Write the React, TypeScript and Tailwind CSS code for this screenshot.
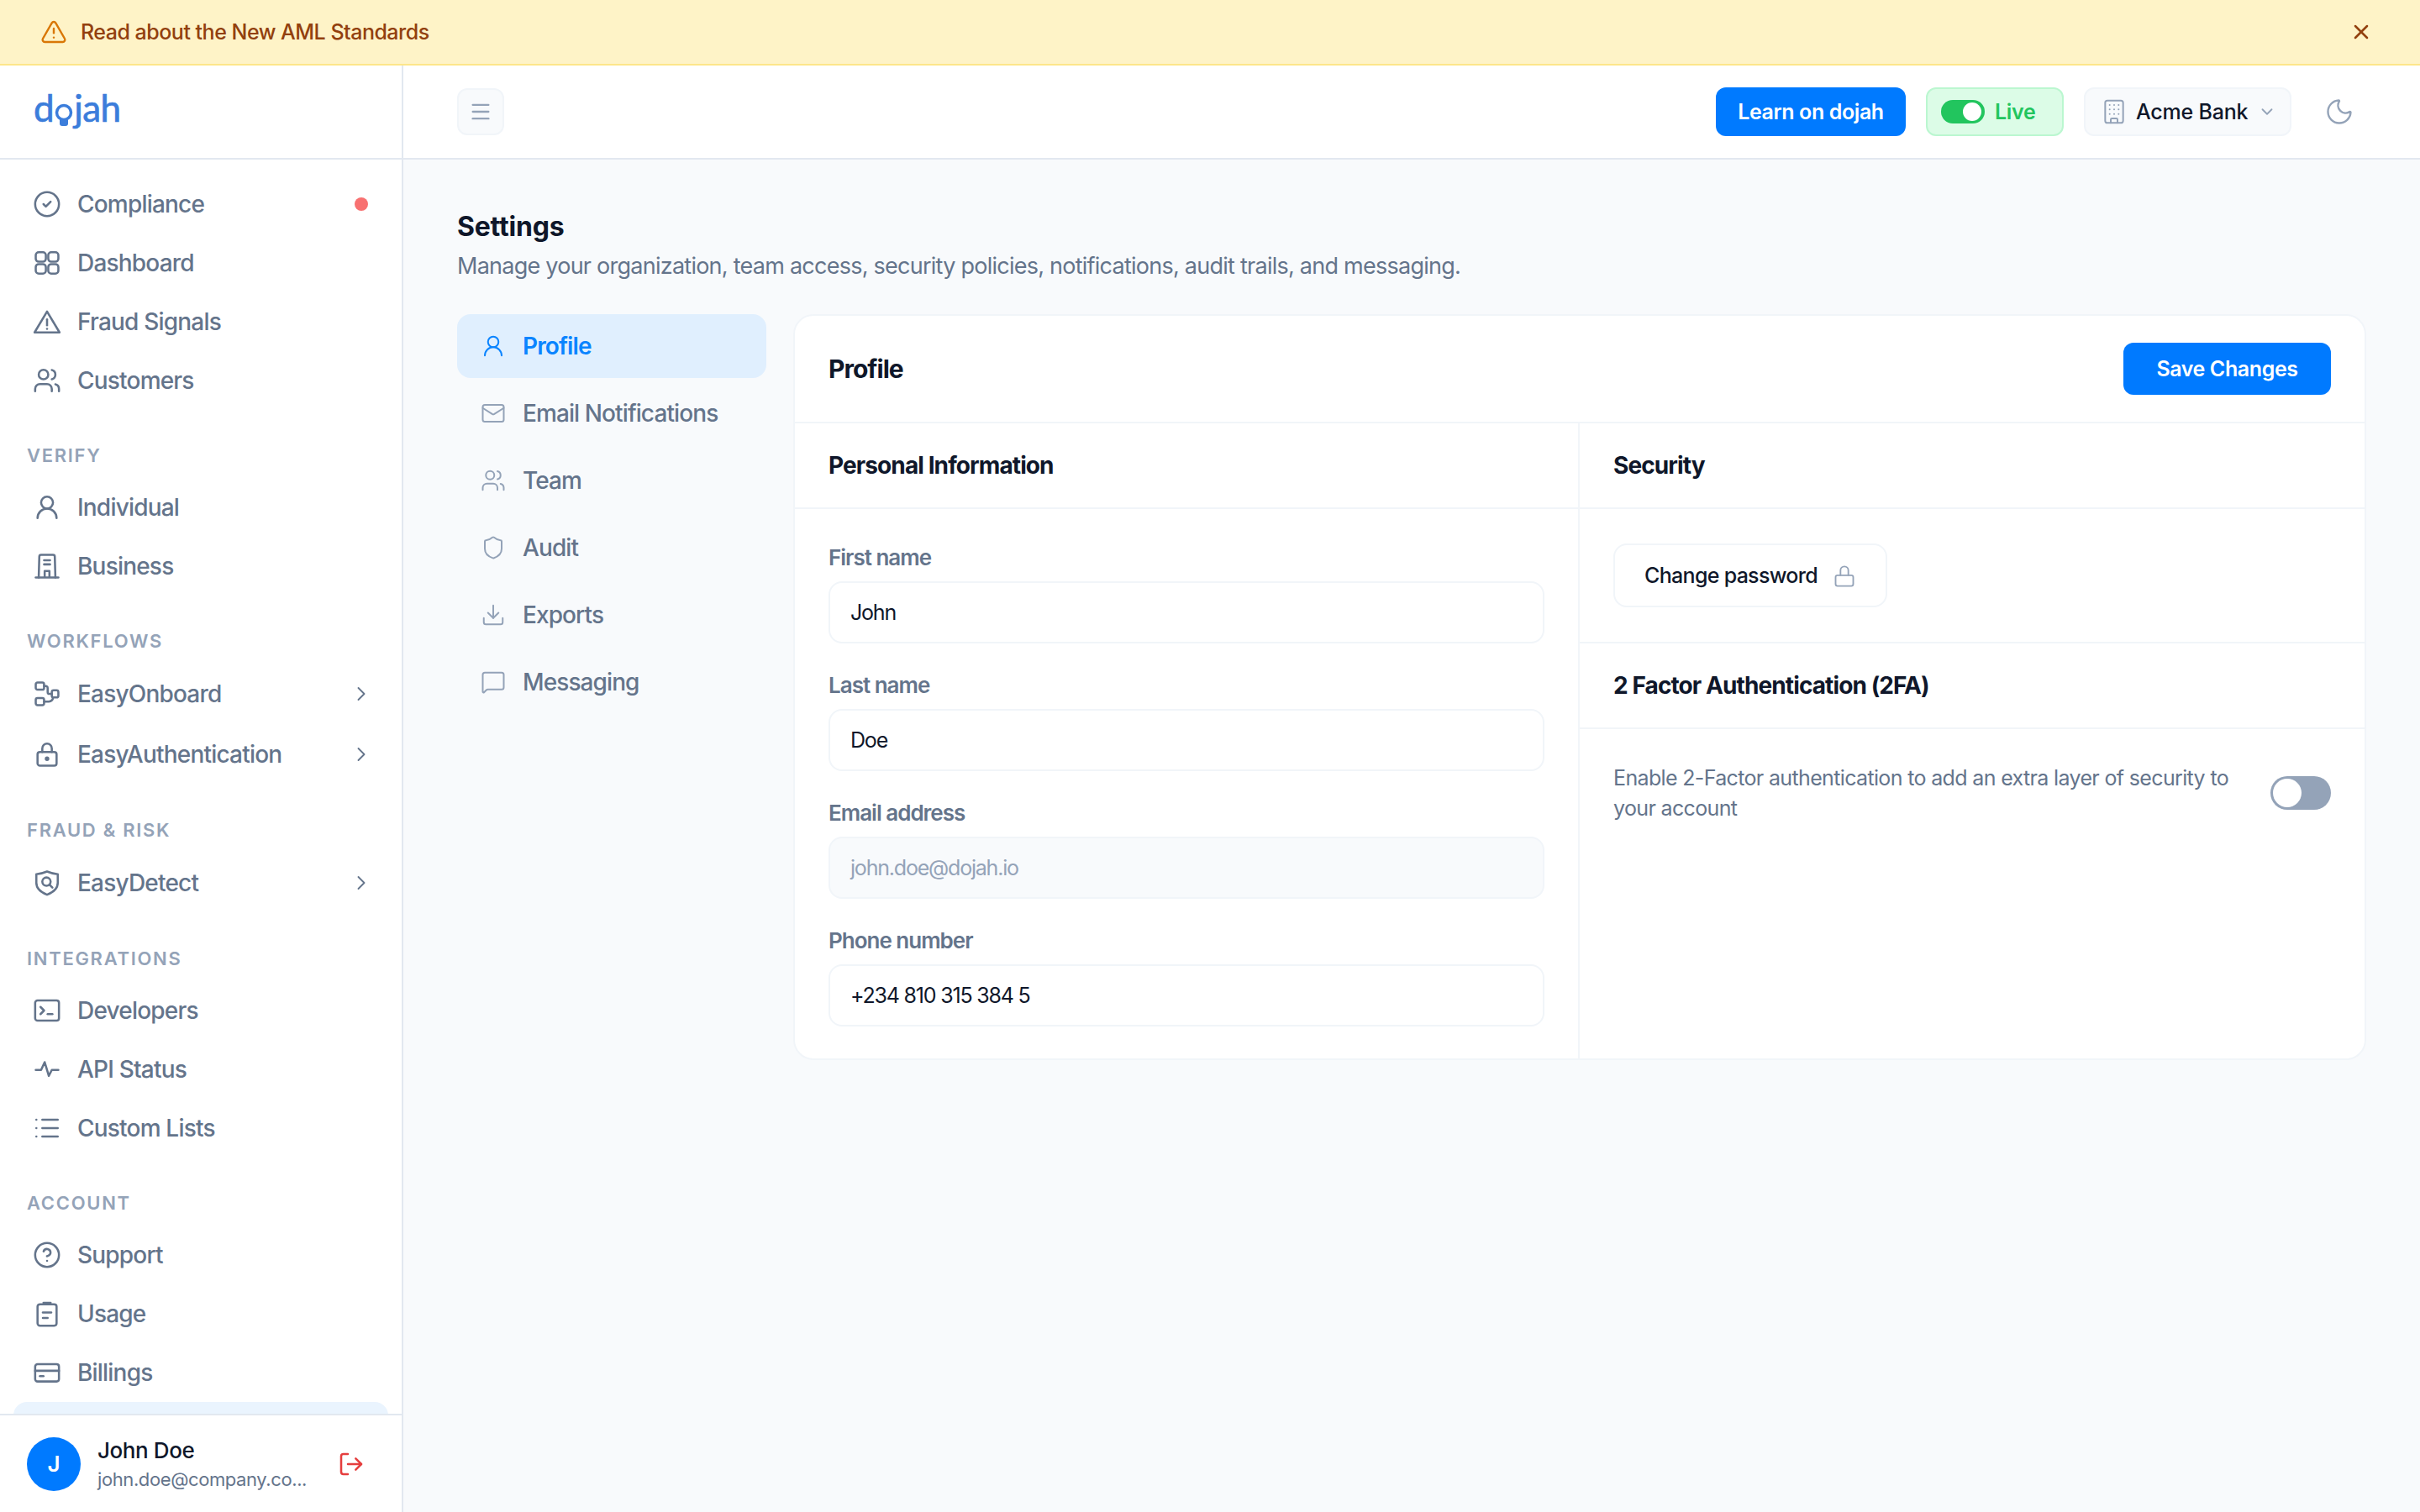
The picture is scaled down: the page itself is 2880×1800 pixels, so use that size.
import React from 'react';
import {
  Building,
  ChevronDown,
  ChevronRight,
  CircleCheck,
  CircleHelp,
  Download,
  List,
  LogOut,
  Mail,
  Menu,
  MessageSquare,
  Moon,
  Shield,
  TriangleAlert,
  UserRound,
  Users,
  X,
} from 'lucide-react';

type IconProps = { className?: string; strokeWidth?: number };

const Svg: React.FC<IconProps & { children: React.ReactNode }> = ({ className, strokeWidth = 2, children }) => (
  <svg
    viewBox="0 0 24 24"
    fill="none"
    stroke="currentColor"
    strokeWidth={strokeWidth}
    strokeLinecap="round"
    strokeLinejoin="round"
    className={className}
  >
    {children}
  </svg>
);

const GridIcon: React.FC<IconProps> = (p) => (
  <Svg {...p}>
    <rect x="2.500" y="3" width="8.500" height="8" rx="2.500" />
    <rect x="13" y="3" width="8.500" height="8" rx="2.500" />
    <rect x="2.500" y="13" width="8.500" height="8" rx="2.500" />
    <rect x="13" y="13" width="8.500" height="8" rx="2.500" />
  </Svg>
);

const FraudIcon: React.FC<IconProps> = (p) => (
  <Svg {...p}>
    <path d="M12 3.500 22.500 21h-21Z" />
    <path d="M12 10v5" />
    <path d="M12 18v.01" />
  </Svg>
);

const BusinessIcon: React.FC<IconProps> = (p) => (
  <Svg {...p}>
    <path d="M2.500 21.500h19" />
    <path d="M5 21.500 5.500 4a1.500 1.500 0 0 1 1.500-1.500h10A1.500 1.500 0 0 1 18.500 4l.5 17.500" />
    <path d="M9.500 7h5" />
    <path d="M9.500 10.500h5" />
    <path d="M10 21v-5h4v5" />
  </Svg>
);

const FlowIcon: React.FC<IconProps> = (p) => (
  <Svg {...p}>
    <rect x="2.500" y="2.500" width="7" height="6" rx="1.500" />
    <rect x="16" y="9" width="5.500" height="6" rx="1.500" />
    <rect x="2.500" y="15.500" width="7" height="6" rx="1.500" />
    <path d="M9.500 5.500h1.500a1.500 1.500 0 0 1 1.500 1.500v3.500a1.500 1.500 0 0 0 1.500 1.500h2" />
    <path d="M9.500 18.500h4a3.500 3.500 0 0 0 3.500-3.500" />
  </Svg>
);

const KeyLockIcon: React.FC<IconProps> = (p) => (
  <Svg {...p}>
    <rect x="4" y="10" width="16" height="11.500" rx="2" />
    <path d="M8 10V7a4 4 0 0 1 8 0v3" />
    <circle cx="12" cy="15.750" r="1" fill="currentColor" />
  </Svg>
);

const DetectIcon: React.FC<IconProps> = (p) => (
  <Svg {...p}>
    <path d="M12 2.500c3 1.300 6 2 9 2.200V12c0 4.500-4 8-9 10-5-2-9-5.500-9-10V4.700c3-.2 6-.9 9-2.200Z" />
    <circle cx="11.500" cy="11" r="3.500" />
    <path d="m14 13.500 2.500 2.500" />
  </Svg>
);

const TerminalIcon: React.FC<IconProps> = (p) => (
  <Svg {...p}>
    <rect x="2" y="3.500" width="20" height="17" rx="2" />
    <path d="m6.500 9 3 3-3 3" />
    <path d="M12.500 15h4" />
  </Svg>
);

const StatusIcon: React.FC<IconProps> = (p) => (
  <Svg {...p}>
    <path d="M2.500 12.500H7L10 6l3.500 11.500 2.500-5h5.500" />
  </Svg>
);

const UsageIcon: React.FC<IconProps> = (p) => (
  <Svg {...p}>
    <rect x="4" y="4" width="16" height="18" rx="2" />
    <path d="M9 2.800h6" />
    <path d="M8.500 11h7" />
    <path d="M8.500 15.500h4" />
  </Svg>
);

const CardIcon: React.FC<IconProps> = (p) => (
  <Svg {...p}>
    <rect x="2" y="5" width="20" height="14.500" rx="2" />
    <path d="M2 10.500h20" />
    <path d="M6 15h3" />
  </Svg>
);

const PasswordLockIcon: React.FC<IconProps> = (p) => (
  <Svg {...p}>
    <rect x="3" y="11" width="18" height="11" rx="2" />
    <path d="M8 11V6a4 4 0 0 1 8 0v5" />
  </Svg>
);

const NavItem: React.FC<{
  icon: React.FC<IconProps>;
  label: string;
  tall?: boolean;
  chevron?: boolean;
  dot?: boolean;
}> = ({ icon: Icon, label, tall, chevron, dot }) => (
  <div
    className={`flex shrink-0 items-center gap-[19px] pl-[23px] pr-[18px] text-[28px] font-medium text-[#64748b] ${
      tall ? 'h-[72px]' : 'h-[70px]'
    }`}
  >
    <Icon className="h-[34px] w-[34px] shrink-0" strokeWidth={1.8} />
    <span className="flex-1 tracking-[-0.8px]">{label}</span>
    {chevron && <ChevronRight className="h-[28px] w-[28px] text-[#64748b]" strokeWidth={1.6} />}
    {dot && <span className="mr-[6px] h-[16px] w-[16px] rounded-full bg-[#f87171]" />}
  </div>
);

const NavLabel: React.FC<{ children: React.ReactNode }> = ({ children }) => (
  <div className="mb-[11px] mt-[38px] h-[32px] shrink-0 pl-[16px] text-[22px] font-semibold leading-[32px] tracking-[1.7px] text-[#94a3b8]">
    {children}
  </div>
);

const Sidebar = () => (
  <aside className="flex h-full w-[480px] shrink-0 flex-col border-r-2 border-[#e2e8f0] bg-white">
    <div className="flex h-[112px] shrink-0 items-center border-b-2 border-[#e2e8f0] pb-[10px] pl-[40px]">
      <div className="flex items-baseline font-['Lato',sans-serif] text-[44px] font-normal leading-none tracking-[-0.5px] text-[#3b7ddb] [-webkit-text-stroke:0.7px_#3b7ddb]">
        <span>d</span>
        <svg viewBox="0 0 24 30" className="h-[30px] w-[24px] translate-y-[8px]" fill="none">
          <circle cx="12" cy="11" r="8.500" stroke="currentColor" strokeWidth="3.500" />
          <path d="M7 20h10v4a3 3 0 0 1-3 3h-4a3 3 0 0 1-3-3Z" fill="currentColor" />
        </svg>
        <span>jah</span>
      </div>
    </div>
    <nav className="flex min-h-0 flex-1 flex-col overflow-hidden px-[16px] pt-[18px]">
      <NavItem icon={CircleCheck} label="Compliance" dot />
      <NavItem icon={GridIcon} label="Dashboard" />
      <NavItem icon={FraudIcon} label="Fraud Signals" />
      <NavItem icon={Users} label="Customers" />
      <NavLabel>VERIFY</NavLabel>
      <NavItem icon={UserRound} label="Individual" />
      <NavItem icon={BusinessIcon} label="Business" />
      <NavLabel>WORKFLOWS</NavLabel>
      <NavItem icon={FlowIcon} label="EasyOnboard" tall chevron />
      <NavItem icon={KeyLockIcon} label="EasyAuthentication" tall chevron />
      <NavLabel>FRAUD &amp; RISK</NavLabel>
      <NavItem icon={DetectIcon} label="EasyDetect" tall chevron />
      <NavLabel>INTEGRATIONS</NavLabel>
      <NavItem icon={TerminalIcon} label="Developers" />
      <NavItem icon={StatusIcon} label="API Status" />
      <NavItem icon={List} label="Custom Lists" />
      <NavLabel>ACCOUNT</NavLabel>
      <NavItem icon={CircleHelp} label="Support" />
      <NavItem icon={UsageIcon} label="Usage" />
      <NavItem icon={CardIcon} label="Billings" />
      {/* active row, scrolled under the footer */}
      <div className="h-[70px] shrink-0 rounded-[16px] bg-[#eaf4fe]" />
    </nav>
    <div className="flex h-[117px] shrink-0 items-center border-t-2 border-[#e2e8f0] bg-white pl-[32px] pr-[44px]">
      <div className="flex h-[64px] w-[64px] shrink-0 items-center justify-center rounded-full bg-[#007aff] text-[26px] font-semibold text-white">
        J
      </div>
      <div className="ml-[20px] min-w-0 flex-1">
        <div className="text-[26px] font-medium leading-[36px] tracking-[-0.4px] text-[#0f172a]">John Doe</div>
        <div className="text-[22px] leading-[32px] tracking-[-0.4px] text-[#64748b]">john.doe@company.co...</div>
      </div>
      <LogOut className="h-[32px] w-[32px] text-[#e53e3e]" strokeWidth={1.9} />
    </div>
  </aside>
);

const Header = () => (
  <header className="flex h-[112px] shrink-0 items-center border-b-2 border-[#e2e8f0] bg-white pl-[64px] pr-[78px]">
    <button className="flex h-[56px] w-[56px] items-center justify-center rounded-[12px] border-2 border-[#f1f5f9] bg-[#f8fafc] text-[#94a3b8]">
      <Menu className="h-[28px] w-[28px]" strokeWidth={2} />
    </button>
    <div className="ml-auto flex items-center">
      <button className="h-[58px] w-[226px] rounded-[12px] bg-[#007aff] pt-[2px] text-[25px] font-semibold tracking-[-0.4px] text-white">
        Learn on dojah
      </button>
      <div className="ml-[24px] flex h-[58px] w-[164px] items-center rounded-[12px] border-2 border-[#bbf7d0] bg-[#dcfce7] pl-[16px]">
        <span className="flex h-[28px] w-[52px] items-center justify-end rounded-full bg-[#22c55e] pr-[4px]">
          <span className="h-[22px] w-[22px] rounded-full bg-white" />
        </span>
        <span className="ml-[12px] pt-[2px] text-[25px] font-semibold tracking-[-0.3px] text-[#22c55e]">Live</span>
      </div>
      <div className="ml-[24px] flex h-[58px] w-[247px] items-center rounded-[12px] border-2 border-[#f1f5f9] bg-[#f8fafc] pl-[18px]">
        <Building className="h-[32px] w-[32px] text-[#94a3b8]" strokeWidth={1.5} />
        <span className="ml-[10px] pt-[2px] text-[25px] font-medium tracking-[-0.2px] text-[#0f172a]">Acme Bank</span>
        <ChevronDown className="ml-[12px] h-[22px] w-[22px] text-[#94a3b8]" />
      </div>
      <Moon className="ml-[39px] h-[36px] w-[36px] text-[#94a3b8]" strokeWidth={1.6} />
    </div>
  </header>
);

const tabs: { icon: React.FC<IconProps>; label: string; active?: boolean }[] = [
  { icon: UserRound, label: 'Profile', active: true },
  { icon: Mail, label: 'Email Notifications' },
  { icon: Users, label: 'Team' },
  { icon: Shield, label: 'Audit' },
  { icon: Download, label: 'Exports' },
  { icon: MessageSquare, label: 'Messaging' },
];

const SettingsTabs = () => (
  <div className="flex w-[368px] shrink-0 flex-col gap-[4px]">
    {tabs.map(({ icon: Icon, label, active }) => (
      <div
        key={label}
        className={`flex h-[76px] items-center gap-[20px] rounded-[16px] pl-[28px] text-[28px] ${
          active ? 'bg-[#e0effe] font-semibold text-[#0a84ff]' : 'font-medium text-[#64748b]'
        }`}
      >
        <Icon className={`h-[30px] w-[30px] ${active ? 'text-[#0a84ff]' : 'text-[#94a3b8]'}`} strokeWidth={1.6} />
        <span className="tracking-[-0.9px]">{label}</span>
      </div>
    ))}
  </div>
);

const Field: React.FC<{ label: string; value: string; disabled?: boolean; first?: boolean }> = ({
  label,
  value,
  disabled,
  first,
}) => (
  <div className={first ? '' : 'mt-[30px]'}>
    <div className="mb-[8px] text-[26px] font-semibold leading-[40px] tracking-[-1px] text-[#64748b]">{label}</div>
    <div
      className={`flex h-[74px] items-center rounded-[16px] border-2 border-[#f1f5f9] pl-[24px] pt-[2px] text-[25px] tracking-[-1.2px] ${
        disabled ? 'bg-[#f8fafc] text-[#94a3b8]' : 'bg-white text-[#0f172a]'
      }`}
    >
      {value}
    </div>
  </div>
);

const SectionTitle: React.FC<{ children: React.ReactNode }> = ({ children }) => (
  <div className="flex h-[102px] items-center border-b-2 border-[#f1f5f9] px-[40px] text-[28px] font-bold tracking-[-0.9px] text-[#0f172a]">
    {children}
  </div>
);

const ProfileCard = () => (
  <div className="h-[888px] min-w-0 flex-1 overflow-hidden rounded-[24px] border-2 border-[#f1f5f9] bg-white">
    <div className="flex h-[128px] items-center justify-between border-b-2 border-[#f1f5f9] px-[40px]">
      <h2 className="text-[30px] font-bold tracking-[-1px] text-[#0f172a]">Profile</h2>
      <button className="h-[62px] w-[247px] rounded-[12px] bg-[#007aff] pt-[2px] text-[25px] font-semibold tracking-[-0.4px] text-white">
        Save Changes
      </button>
    </div>
    <div className="grid h-[756px] grid-cols-2">
      <div className="border-r-2 border-[#f1f5f9]">
        <SectionTitle>Personal Information</SectionTitle>
        <div className="px-[40px] pt-[38px]">
          <Field first label="First name" value="John" />
          <Field label="Last name" value="Doe" />
          <Field label="Email address" value="john.doe@dojah.io" disabled />
          <Field label="Phone number" value="+234 810 315 384 5" />
        </div>
      </div>
      <div>
        <SectionTitle>Security</SectionTitle>
        <div className="border-b-2 border-[#f1f5f9] px-[40px] py-[41px]">
          <button className="flex h-[76px] w-[326px] items-center justify-center gap-[18px] rounded-[16px] border-2 border-[#f1f5f9] bg-white pt-[2px] text-[25px] font-medium tracking-[-0.7px] text-[#0f172a]">
            Change password
            <PasswordLockIcon className="h-[30px] w-[28px] text-[#94a3b8]" strokeWidth={1.6} />
          </button>
        </div>
        <SectionTitle>2 Factor Authentication (2FA)</SectionTitle>
        <div className="flex items-center justify-between px-[40px] pt-[40px]">
          <p className="w-[760px] text-[25px] leading-[36px] tracking-[-0.65px] text-[#64748b]">
            Enable 2-Factor authentication to add an extra layer of security to your account
          </p>
          <span className="flex h-[40px] w-[72px] items-center rounded-full bg-[#94a3b8] pl-[3px]">
            <span className="h-[34px] w-[34px] rounded-full bg-white" />
          </span>
        </div>
      </div>
    </div>
  </div>
);

export default function App() {
  return (
    <div className="flex h-[1800px] w-[2880px] flex-col overflow-hidden bg-[#f8fafc] font-['Inter',sans-serif]">
      <div className="flex h-[78px] shrink-0 items-center border-b-2 border-[#fde68a] bg-[#fef3c7] pl-[48px] pr-[56px]">
        <TriangleAlert className="h-[32px] w-[32px] text-[#d97706]" strokeWidth={1.8} />
        <span className="ml-[16px] pt-[2px] text-[25px] font-medium tracking-[-0.5px] text-[#92400e]">
          Read about the New AML Standards
        </span>
        <X className="ml-auto h-[28px] w-[28px] text-[#92400e]" strokeWidth={2.2} />
      </div>
      <div className="flex min-h-0 flex-1">
        <Sidebar />
        <div className="flex min-w-0 flex-1 flex-col">
          <Header />
          <main className="flex-1 px-[64px] pt-[58px]">
            <h1 className="text-[32px] font-bold leading-[44px] tracking-[-0.2px] text-[#0f172a]">Settings</h1>
            <p className="mt-[5px] text-[27px] leading-[40px] tracking-[-0.75px] text-[#64748b]">
              Manage your organization, team access, security policies, notifications, audit trails, and messaging.
            </p>
            <div className="mt-[37px] flex items-start gap-[32px]">
              <SettingsTabs />
              <ProfileCard />
            </div>
          </main>
        </div>
      </div>
    </div>
  );
}
